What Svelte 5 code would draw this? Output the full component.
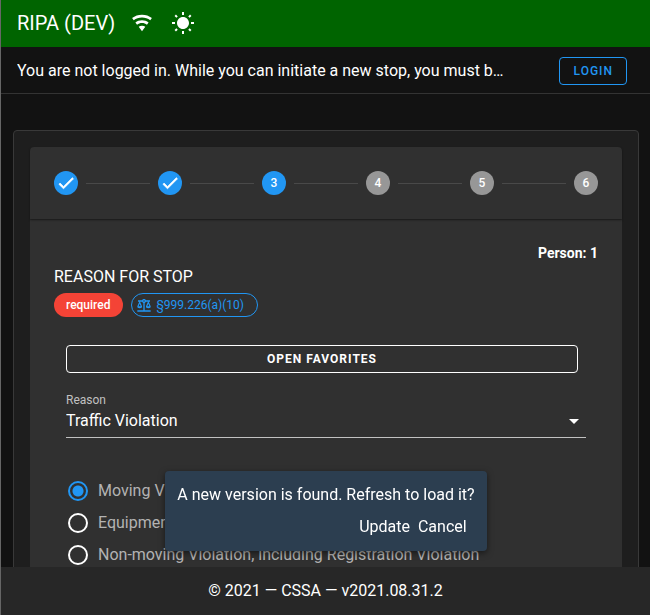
<script>
  const steps = [1, 2, 3, 4, 5, 6];
  const current = 3;
  const reasons = ['Traffic Violation', 'Reasonable Suspicion', 'Consensual Encounter'];
  const violations = [
    'Moving Violation',
    'Equipment Violation',
    'Non-moving Violation, including Registration Violation'
  ];
  let reason = $state('Traffic Violation');
  let violation = $state('Moving Violation');
  let updateFound = $state(true);
</script>

<div class="app">
  <header class="bar">
    <h1>RIPA (DEV)</h1>
    <svg class="wifi" viewBox="0 0 24 24" aria-hidden="true"><path d="M12,21L15.6,16.2C14.6,15.45 13.35,15 12,15C10.65,15 9.4,15.45 8.4,16.2L12,21M12,3C7.95,3 4.21,4.34 1.2,6.6L3,9C5.5,7.12 8.62,6 12,6C15.38,6 18.5,7.12 21,9L22.8,6.6C19.79,4.34 16.05,3 12,3M12,9C9.3,9 6.81,9.89 4.8,11.4L6.6,13.8C8.1,12.67 9.97,12 12,12C14.03,12 15.9,12.67 17.4,13.8L19.2,11.4C17.19,9.89 14.7,9 12,9Z" /></svg>
    <button class="theme" aria-label="Toggle theme">
      <svg viewBox="0 0 24 24" aria-hidden="true"><path d="M3.55 19.09L4.96 20.5L6.76 18.71L5.34 17.29M12 6C8.69 6 6 8.69 6 12S8.69 18 12 18 18 15.31 18 12C18 8.68 15.31 6 12 6M20 13H23V11H20M17.24 18.71L19.04 20.5L20.45 19.09L18.66 17.29M20.45 5L19.04 3.6L17.24 5.39L18.66 6.81M13 1H11V4H13M6.76 5.39L4.96 3.6L3.55 5L5.34 6.81L6.76 5.39M1 13H4V11H1M13 20H11V23H13" /></svg>
    </button>
  </header>

  <div class="banner">
    <p>You are not logged in. While you can initiate a new stop, you must be logged in</p>
    <button class="login">LOGIN</button>
  </div>

  <main>
    <section class="card">
      <div class="stepper">
        <ol class="steps">
          {#each steps as step}
            <li class:active={step <= current}>
              <span class="dot">
                {#if step < current}
                  <svg viewBox="0 0 24 24" role="img" aria-label="Done"><path d="M21,7L9,19L3.5,13.5L4.91,12.09L9,16.17L19.59,5.59L21,7Z" /></svg>
                {:else}
                  {step}
                {/if}
              </span>
            </li>
          {/each}
        </ol>

        <form class="body">
          <p class="person">Person: 1</p>
          <h2>REASON FOR STOP</h2>
          <div class="chips">
            <span class="chip required">required</span>
            <button type="button" class="chip statute">
              <svg viewBox="0 0 24 24" aria-hidden="true"><path d="M12,3C10.73,3 9.6,3.8 9.18,5H3V7H4.95L2,14C1.53,16 3,17 5.5,17C8,17 9.56,16 9,14L6.05,7H9.17C9.5,7.85 10.15,8.5 11,8.83V20H2V22H22V20H13V8.82C13.85,8.5 14.5,7.85 14.82,7H17.95L15,14C14.53,16 16,17 18.5,17C21,17 22.56,16 22,14L19.05,7H21V5H14.83C14.4,3.8 13.27,3 12,3M12,5A1,1 0 0,1 13,6A1,1 0 0,1 12,7A1,1 0 0,1 11,6A1,1 0 0,1 12,5M5.5,10.25L7,14H4L5.5,10.25M18.5,10.25L20,14H17L18.5,10.25Z" /></svg>
              §999.226(a)(10)
            </button>
          </div>

          <div class="fields">
            <button type="button" class="favorites">OPEN FAVORITES</button>

            <div class="field">
              <label for="reason">Reason</label>
              <div class="select">
                <select id="reason" bind:value={reason}>
                  {#each reasons as item}
                    <option>{item}</option>
                  {/each}
                </select>
                <svg viewBox="0 0 24 24" aria-hidden="true"><path d="M7,10L12,15L17,10H7Z" /></svg>
              </div>
            </div>

            <div class="radios" role="radiogroup" aria-label="Violation type">
              {#each violations as item}
                <label>
                  <input type="radio" name="violation" value={item} bind:group={violation} />
                  {item}
                </label>
              {/each}
            </div>
          </div>
        </form>
      </div>
    </section>
  </main>

  <footer>© 2021 — CSSA — v2021.08.31.2</footer>

  {#if updateFound}
    <div class="toast" role="status">
      <p>A new version is found. Refresh to load it?</p>
      <div class="actions">
        <button onclick={() => location.reload()}>Update</button>
        <button onclick={() => (updateFound = false)}>Cancel</button>
      </div>
    </div>
  {/if}
</div>

<style>
  :global(body) {
    background: #121212;
  }
  .app,
  .app * {
    box-sizing: border-box;
  }
  .app {
    display: flex;
    flex-direction: column;
    height: 100vh;
    overflow: hidden;
    border-left: 1px solid #666;
    background: #121212;
    color: #fff;
    font: 400 16px/24px Roboto, sans-serif;
  }
  h1,
  h2,
  p,
  ol {
    margin: 0;
    padding: 0;
    font-weight: 400;
  }
  button {
    margin: 0;
    padding: 0;
    border: 0;
    background: none;
    color: inherit;
    font: inherit;
    cursor: pointer;
  }
  svg {
    display: block;
    flex: none;
    width: 24px;
    height: 24px;
    fill: currentColor;
  }

  .bar {
    display: flex;
    flex: none;
    align-items: center;
    height: 47px;
    padding: 0 16px 2px;
    background: #006400;
  }
  h1 {
    font-size: 20px;
  }
  .wifi {
    width: 22px;
    height: 22px;
    margin: 0 18px 0 16px;
  }

  .banner {
    display: flex;
    flex: none;
    align-items: center;
    justify-content: space-between;
    height: 47px;
    padding: 1px 23px 0 16px;
    border-bottom: 1px solid #333;
  }
  .banner p {
    flex: 0 1 488px;
    overflow: hidden;
    white-space: nowrap;
    text-overflow: ellipsis;
  }
  .login {
    flex: none;
    height: 28px;
    padding: 0 13px 0 14px;
    border: 1px solid #2196f3;
    border-radius: 4px;
    color: #2196f3;
    font-size: 12px;
    font-weight: 500;
    line-height: 26px;
    letter-spacing: 1px;
  }

  main {
    flex: 1;
    min-height: 0;
    overflow: hidden;
    padding: 36px 11px 0 12px;
  }
  .card {
    padding: 16px;
    border: 1px solid #393939;
    border-radius: 4px;
    background: #1e1e1e;
  }
  .stepper {
    border-radius: 4px;
    background: #303030;
  }
  .steps {
    display: flex;
    padding: 24px;
    list-style: none;
    border-radius: 4px 4px 0 0;
    box-shadow: 0 1px 2px rgba(0, 0, 0, 0.5);
  }
  .steps li {
    display: flex;
    align-items: center;
  }
  .steps li + li {
    flex: 1;
  }
  .steps li + li::before {
    content: '';
    flex: 1;
    height: 1px;
    margin: 0 8px;
    background: #494949;
  }
  .dot {
    display: flex;
    align-items: center;
    justify-content: center;
    width: 24px;
    height: 24px;
    border-radius: 50%;
    background: #979797;
    font-size: 12px;
    font-weight: 500;
  }
  .active .dot {
    background: #2196f3;
  }
  .dot svg {
    width: 20px;
    height: 20px;
    stroke: currentColor;
    stroke-width: 0.8;
  }

  .body {
    padding: 24px;
  }
  .person {
    font-size: 14px;
    font-weight: 700;
    line-height: 20px;
    text-align: right;
  }
  h2 {
    margin-top: 2px;
    font-size: 16px;
    line-height: 24px;
  }
  .chips {
    display: flex;
    gap: 8px;
    margin-top: 4px;
  }
  .chip {
    display: inline-flex;
    align-items: center;
    height: 24px;
    padding: 0 13px 0 12px;
    border-radius: 12px;
    font-size: 12px;
  }
  .required {
    background: #f44336;
    font-weight: 500;
  }
  .statute {
    gap: 4px;
    padding-left: 4px;
    border: 1px solid #2196f3;
    color: #2196f3;
  }
  .statute svg {
    width: 16px;
    height: 16px;
  }

  .fields {
    padding: 28px 12px 12px;
  }
  .favorites {
    display: block;
    width: calc(100% - 8px);
    height: 28px;
    border: 1px solid #fff;
    border-radius: 4px;
    font-size: 12px;
    font-weight: 700;
    line-height: 26px;
    letter-spacing: 1px;
  }
  .field {
    margin-top: 19px;
    border-bottom: 1px solid #c1c1c1;
  }
  .field label {
    display: block;
    color: #c1c1c1;
    font-size: 12px;
    line-height: 16px;
  }
  .select {
    position: relative;
    height: 29px;
  }
  .select select {
    width: 100%;
    height: 26px;
    margin: 0;
    padding: 0;
    border: 0;
    outline: 0;
    background: transparent;
    color: #fff;
    font: inherit;
    appearance: none;
  }
  .select option {
    background: #303030;
  }
  .select svg {
    position: absolute;
    top: 1px;
    right: 0;
    pointer-events: none;
  }

  .radios {
    display: flex;
    flex-direction: column;
    gap: 8px;
    margin-top: 41px;
  }
  .radios label {
    display: flex;
    align-items: center;
    gap: 10px;
    padding-left: 2px;
    color: #b3b3b3;
  }
  .radios input {
    flex: none;
    width: 20px;
    height: 20px;
    margin: 0;
    border: 2px solid #fff;
    border-radius: 50%;
    appearance: none;
  }
  .radios input:checked {
    border-color: #2196f3;
    background: radial-gradient(circle, #2196f3 5px, transparent 6px);
  }

  footer {
    flex: none;
    padding: 12px 16px;
    background: #272727;
    text-align: center;
  }

  .toast {
    position: fixed;
    right: 0;
    bottom: 64px;
    left: 2px;
    width: fit-content;
    margin: 0 auto;
    padding: 12px;
    border-radius: 4px;
    background: #2c3e50;
    box-shadow: 0 2px 6px rgba(0, 0, 0, 0.5);
    line-height: 24px;
    white-space: nowrap;
  }
  .actions {
    display: flex;
    justify-content: flex-end;
    gap: 8px;
    margin-top: 8px;
    padding-right: 8px;
  }
</style>
